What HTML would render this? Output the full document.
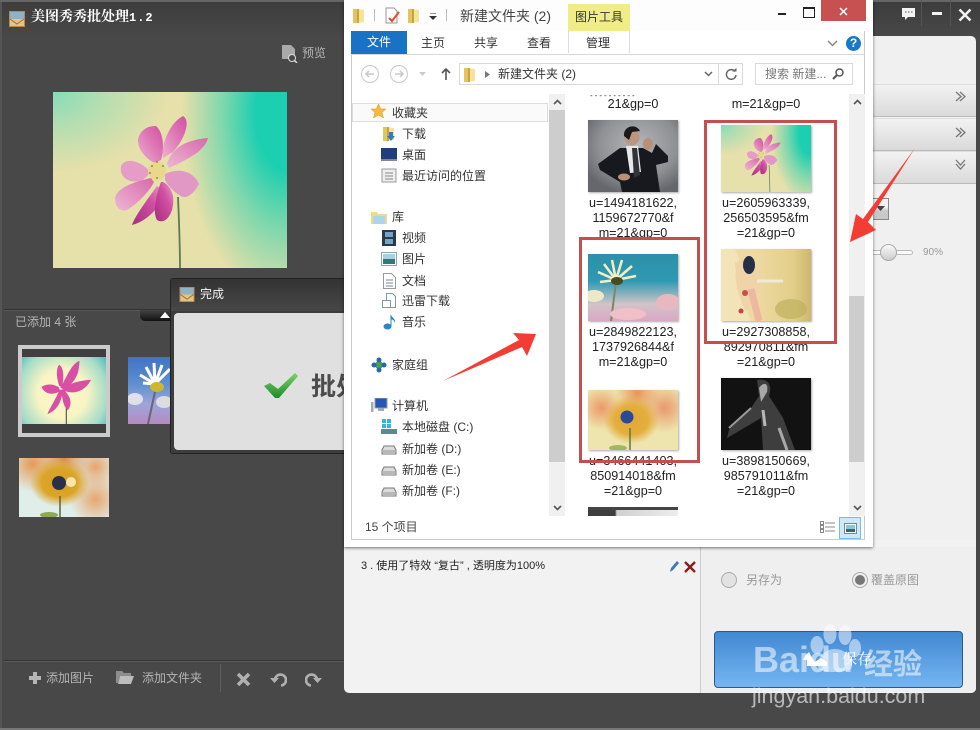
<!DOCTYPE html>
<html lang="zh">
<head>
<meta charset="utf-8">
<title>美图秀秀批处理</title>
<style>
html,body{margin:0;padding:0;background:#484848}
#r{position:relative;width:980px;height:730px;overflow:hidden;background:#484848;font-family:"Liberation Sans","Noto Sans CJK SC",sans-serif;font-size:12px}
#r div,#r svg{position:absolute}
.t{position:absolute;white-space:nowrap;line-height:16px}
.g{color:#b4b4b4;font-family:"Liberation Sans","WenQuanYi Zen Hei",sans-serif}
.e{color:#333}
.c{position:absolute;width:100px;text-align:center;color:#222;font-size:12.6px;line-height:15px;font-family:"Liberation Sans","Noto Sans CJK SC",sans-serif}
.box{border:3px solid #c64e4e;box-sizing:border-box}
svg use{position:static}
</style>
</head>
<body>
<div id="r">
<svg width="0" height="0" style="position:absolute">
<defs>
<linearGradient id="p1" x1="0" y1="1" x2="1" y2="0"><stop offset="0" stop-color="#eeb0d0"/><stop offset=".55" stop-color="#de78b6"/><stop offset="1" stop-color="#d050a2"/></linearGradient>
<linearGradient id="p2" x1="1" y1="0" x2="0" y2="1"><stop offset="0" stop-color="#d868ac"/><stop offset="1" stop-color="#eeb8d2"/></linearGradient>
<linearGradient id="p3" x1="0" y1="1" x2="1" y2="0"><stop offset="0" stop-color="#a82c80"/><stop offset=".6" stop-color="#d050a2"/><stop offset="1" stop-color="#e8a0c8"/></linearGradient>
<symbol id="fl" viewBox="0 0 234 176" preserveAspectRatio="none">
<path d="M125 105C126 130 127 150 127 176" fill="none" stroke="#5f7a55" stroke-width="1.800"/>
<path d="M110 66C108 50 118 30 130 24C137 28 134 44 120 60Z" fill="url(#p1)"/>
<path d="M102 71C90 66 82 52 86 44C90 36 96 34 103 34C110 40 112 55 108 68Z" fill="url(#p1)"/>
<path d="M114 72C118 58 130 48 155 46C152 58 138 66 116 76Z" fill="url(#p2)"/>
<path d="M98 80C88 70 74 64 68 74C66 88 80 92 90 88Z" fill="#e59cc6"/>
<path d="M98 86C80 90 64 96 62 106C62 116 68 120 74 118C84 112 96 100 101 90Z" fill="url(#p2)"/>
<path d="M104 94C94 108 82 124 79 133C92 130 108 116 112 100Z" fill="url(#p3)"/>
<path d="M108 90C102 105 100 122 104 128C114 134 122 118 120 104C118 96 114 92 110 90Z" fill="url(#p3)"/>
<path d="M112 82C124 76 140 78 146 92C142 100 134 108 128 104C120 100 114 92 112 88Z" fill="#e298c4"/>
<ellipse cx="104" cy="79" rx="9" ry="9" fill="#e8d88c"/>
<g fill="#8a6a5a"><circle cx="99" cy="74" r=".9"/><circle cx="104" cy="70" r=".9"/><circle cx="110" cy="74" r=".9"/><circle cx="97" cy="81" r=".9"/><circle cx="104" cy="86" r=".9"/></g>
</symbol>
<symbol id="ico" viewBox="0 0 16 16">
<rect width="16" height="16" fill="#bd8845"/>
<rect x="1" y="1" width="14" height="7" fill="#8fb2c4"/>
<rect x="1" y="8" width="14" height="7" fill="#e4c47e"/>
<path d="M1 8L8 13L15 8" fill="none" stroke="#a66e2e"/>
</symbol>
<symbol id="fd" viewBox="0 0 14 16">
<path d="M1 2h5v14H1z" fill="#e4c45e"/><path d="M5 2l7 1v12l-7 1z" fill="#f4e49a"/><path d="M5 2h2v14H5z" fill="#c9a43c"/>
</symbol>
<symbol id="drv" viewBox="0 0 16 12">
<path d="M3 2h10l2 4v4H1V6z" fill="#dcdcdc" stroke="#777"/><rect x="2" y="6" width="12" height="4" fill="#b8b8b8"/>
</symbol>
</defs>
</svg>

<!-- App base -->
<div style="left:0;top:0;width:980px;height:36px;background:linear-gradient(#3c3c3c,#484848)"></div>
<div style="left:0;top:0;width:980px;height:2px;background:#666"></div>
<div style="left:0;top:2px;width:2px;height:726px;background:#555"></div>
<div style="left:0;top:728px;width:980px;height:2px;background:#777"></div>
<svg style="left:9px;top:11px" width="16" height="16"><use href="#ico"/></svg>
<div class="t" style="left:31px;top:10px;color:#fff;font:bold 14px/16px 'Liberation Serif','Noto Serif CJK SC',serif">美图秀秀批处理<span style="font:bold 12px/16px 'Liberation Mono',monospace;letter-spacing:1px">1.2</span></div>
<svg style="left:281px;top:45px" width="17" height="18" viewBox="0 0 17 18"><path d="M1 0h9l4 4v10H1z" fill="#a9a9a9"/><circle cx="11" cy="13" r="3.5" fill="#484848" stroke="#ddd"/><path d="M13.5 15.5L16 18" stroke="#ddd" stroke-width="1.5"/></svg>
<div class="t g" style="left:302px;top:45px;font-size:12px">预览</div>

<!-- Main preview -->
<div style="left:53px;top:92px;width:234px;height:176px;background:radial-gradient(ellipse 105px 190px at 100% 12%,#1ccfb0 0,#1ccfb0 30%,rgba(28,207,176,.5) 62%,rgba(28,207,176,0) 100%),radial-gradient(ellipse 115px 80px at 0 0,#86dcb8 0,rgba(134,220,184,.5) 45%,rgba(134,220,184,0) 100%),#e6e0aa"></div>
<svg style="left:53px;top:92px" width="234" height="176"><use href="#fl"/></svg>

<div style="left:4px;top:309px;width:340px;height:1px;background:#333"></div>
<div style="left:4px;top:310px;width:340px;height:1px;background:#585858"></div>
<div style="left:140px;top:310px;width:34px;height:11px;background:linear-gradient(#444,#111);border-radius:0 0 0 5px"></div>
<svg style="left:160px;top:312px" width="10" height="6"><path d="M0 6L5 0L10 6Z" fill="#fff"/></svg>
<div class="t g" style="left:15px;top:314px;font-size:12px">已添加 4 张</div>

<!-- thumbs -->
<div style="left:18px;top:345px;width:84px;height:84px;border:4px solid #cbcbcb;background:#3f3f3f"></div>
<div style="left:22px;top:357px;width:84px;height:67px;background:radial-gradient(ellipse 62px 62px at 48% 55%,#fcf8c8 0,#f8f4c4 40%,#a6dcc8 72%,#30aab8 100%)"></div>
<svg style="left:30px;top:357px" width="68" height="67" viewBox="0 0 234 176" preserveAspectRatio="none"><path d="M125 100V176" stroke="#555" stroke-width="4"/><g fill="#d84fa4"><path d="M104 80C130 50 140 20 170 10C170 50 150 70 115 85Z"/><path d="M100 75C90 50 90 30 100 20C120 30 115 60 110 80Z"/><path d="M100 80C80 70 60 70 40 78C50 100 85 100 102 90Z"/><path d="M102 85C90 110 70 130 60 150C95 140 110 115 112 88Z"/><path d="M108 85C110 110 115 130 130 140C150 120 135 100 115 85Z"/><path d="M112 78C140 70 180 60 210 60C190 90 150 100 115 88Z"/></g></svg>
<div style="left:128px;top:357px;width:44px;height:67px;background:linear-gradient(#3f73c5 0,#5e8fd0 40%,#9da6da 70%,#b58ac0 100%)"></div>
<svg style="left:128px;top:357px" width="43" height="67"><path d="M28 30L20 67" stroke="#667" stroke-width="2"/><g stroke="#fff" stroke-width="3"><path d="M27 27L12 18M27 27L18 10M27 27L26 6M27 27L34 8M27 27L42 12M27 27L15 26"/></g><ellipse cx="29" cy="30" rx="7" ry="5" fill="#cab830"/><ellipse cx="7" cy="42" rx="8" ry="6" fill="#dfe0e8"/><ellipse cx="36" cy="45" rx="8" ry="6" fill="#dcdde0"/></svg>
<div style="left:19px;top:458px;width:90px;height:59px;background:radial-gradient(ellipse 30px 24px at 45% 42%,#d6a020 0,#dca52a 60%,transparent 100%),radial-gradient(circle at 85% 70%,#e8a66e 0,transparent 30%),radial-gradient(circle at 15% 10%,#e59a56 0,transparent 30%),radial-gradient(circle at 85% 15%,#e8a56c 0,transparent 25%),radial-gradient(circle at 50% 0,#d88c48 0,transparent 35%),#dfeee8"></div>
<svg style="left:19px;top:458px" width="90" height="59"><circle cx="40" cy="25" r="7" fill="#28304a"/><path d="M41 38V59" stroke="#59663a" stroke-width="1.500"/><ellipse cx="30" cy="57" rx="9" ry="3" fill="#90a850"/><circle cx="52" cy="24" r="5" fill="#fff4d0" opacity=".8"/></svg>

<!-- bottom toolbar -->
<div style="left:4px;top:660px;width:340px;height:1px;background:#333"></div>
<div style="left:4px;top:661px;width:340px;height:1px;background:#5a5a5a"></div>
<svg style="left:29px;top:672px" width="12" height="12"><path d="M4 0h4v4h4v4H8v4H4V8H0V4h4z" fill="#b5b5b5"/></svg>
<div class="t g" style="left:46px;top:670px">添加图片</div>
<svg style="left:116px;top:671px" width="18" height="14"><path d="M0 0h6l2 2h7v3H4L2 12H0z" fill="#8d8d8d"/><path d="M4 5h14l-3 8H2z" fill="#bcbcbc"/></svg>
<div class="t g" style="left:142px;top:670px">添加文件夹</div>
<div style="left:220px;top:664px;width:1px;height:28px;background:#5f5f5f"></div>
<svg style="left:236px;top:672px" width="15" height="15"><path d="M2 2L13 13M13 2L2 13" stroke="#b0b0b0" stroke-width="3.600"/></svg>
<svg style="left:270px;top:671px" width="17" height="16" fill="none"><path d="M5 10V9A5.500 5.500 0 1 1 11 14.500" stroke="#b0b0b0" stroke-width="2.600"/><path d="M0 7h9l-4.500 5z" fill="#b0b0b0"/></svg>
<svg style="left:305px;top:671px" width="17" height="16" fill="none"><path d="M12 10V9A5.500 5.500 0 1 0 6 14.500" stroke="#b0b0b0" stroke-width="2.600"/><path d="M17 7h-9l4.500 5z" fill="#b0b0b0"/></svg>

<!-- dialog -->
<div style="left:170px;top:278px;width:180px;height:176px;background:#3d3d3d;border:1px solid #222;border-radius:3px 0 0 3px;box-sizing:border-box"></div>
<div style="left:171px;top:279px;width:175px;height:32px;background:linear-gradient(#333,#474747)"></div>
<svg style="left:179px;top:287px" width="16" height="15"><use href="#ico"/></svg>
<div class="t" style="left:200px;top:286px;color:#f4f4f4;font-size:12px">完成</div>
<div style="left:174px;top:313px;width:175px;height:137px;background:#e0e0e0;border-radius:4px"></div>
<svg style="left:263px;top:372px" width="36" height="27" viewBox="0 0 36 27"><defs><linearGradient id="ck" x1="0" y1="0" x2="0" y2="1"><stop offset="0" stop-color="#7ad268"/><stop offset="1" stop-color="#1e8c28"/></linearGradient></defs><path d="M1 14L7 11L15 17L32 1L35 4L16 26L12 26Z" fill="url(#ck)"/></svg>
<div class="t" style="left:311px;top:372px;line-height:30px;font-size:25px;font-weight:bold;color:#4c4c4c">批处</div>

<!-- right panel -->
<div style="left:860px;top:36px;width:116px;height:657px;background:#f0f0f0;border-radius:0 5px 5px 0"></div>
<div style="left:860px;top:84px;width:116px;height:31px;background:linear-gradient(#f2f2f2,#dadada);border-top:1px solid #ddd;border-bottom:1px solid #bbb"></div>
<div style="left:860px;top:118px;width:116px;height:31px;background:linear-gradient(#f2f2f2,#dadada);border-top:1px solid #ddd;border-bottom:1px solid #bbb"></div>
<div style="left:860px;top:151px;width:116px;height:31px;background:linear-gradient(#f2f2f2,#dadada);border-top:1px solid #ddd;border-bottom:1px solid #bbb"></div>
<svg style="left:955px;top:91px" width="11" height="11" fill="none" stroke="#777" stroke-width="1.300"><path d="M1 1L6 5.500L1 10M5 1L10 5.500L5 10"/></svg>
<svg style="left:955px;top:127px" width="11" height="11" fill="none" stroke="#777" stroke-width="1.300"><path d="M1 1L6 5.500L1 10M5 1L10 5.500L5 10"/></svg>
<svg style="left:955px;top:159px" width="11" height="11" fill="none" stroke="#777" stroke-width="1.300"><path d="M1 1L5.500 6L10 1M1 5L5.500 10L10 5"/></svg>
<div style="left:860px;top:198px;width:29px;height:22px;background:linear-gradient(#f2f2f2 40%,#c8c8c8 60%);border:1px solid #888;box-sizing:border-box"></div>
<svg style="left:876px;top:206px" width="9" height="5"><path d="M0 0h9L4.500 5z" fill="#444"/></svg>
<div style="left:870px;top:250px;width:41px;height:3px;background:#fafafa;border:1px solid #bbb;border-radius:4px"></div>
<div style="left:880px;top:244px;width:15px;height:15px;background:linear-gradient(#fafafa,#ccc);border:1px solid #aaa;border-radius:50%"></div>
<div class="t" style="left:923px;top:245px;color:#999;font-size:10px">90%</div>

<!-- top right buttons -->
<svg style="left:902px;top:8px" width="13" height="12"><path d="M0 0h13v9H6l-3 3V9H0z" fill="#f2f2f2"/><path d="M3 4h1.500M6 4h1.500M9 4h1.500" stroke="#555"/></svg>
<div style="left:921px;top:0;width:1px;height:26px;background:#555"></div>
<div style="left:950px;top:0;width:1px;height:26px;background:#555"></div>
<div style="left:932px;top:12px;width:10px;height:3px;background:#f2f2f2"></div>
<svg style="left:958px;top:8px" width="14" height="14"><path d="M1.500 1.500L12.500 12.500M12.500 1.500L1.500 12.500" stroke="#f2f2f2" stroke-width="2.500"/></svg>

<!-- bottom panel -->
<div style="left:344px;top:540px;width:632px;height:153px;background:#f2f2f2;border-radius:0 0 5px 5px"></div>
<div style="left:700px;top:547px;width:1px;height:146px;background:#ccc"></div>
<div style="left:701px;top:547px;width:275px;height:146px;background:#efefef;border-radius:0 0 5px 0"></div>
<div class="t" style="left:361px;top:558px;color:#222;font:11px/16px 'Liberation Sans','WenQuanYi Zen Hei',sans-serif">3 . 使用了特效 “复古” , 透明度为100%</div>
<svg style="left:669px;top:560px" width="12" height="13"><path d="M1 12L2 8L8 1L10 3L4 10Z" fill="#3a78b8"/></svg>
<svg style="left:684px;top:561px" width="12" height="12"><path d="M1 1L11 11M11 1L1 11" stroke="#8a1c1c" stroke-width="2.400"/></svg>
<div style="left:721px;top:572px;width:14px;height:14px;background:#e2e2e2;border:1px solid #aaa;border-radius:50%"></div>
<div class="t g" style="left:746px;top:572px;color:#999">另存为</div>
<div style="left:852px;top:572px;width:14px;height:14px;background:#eee;border:1px solid #aaa;border-radius:50%"></div>
<div style="left:855px;top:575px;width:10px;height:10px;background:#777;border-radius:50%"></div>
<div class="t g" style="left:871px;top:572px;color:#999">覆盖原图</div>
<div style="left:714px;top:631px;width:249px;height:57px;box-sizing:border-box;background:linear-gradient(#4288d2,#75b6f2);border:1px solid #265c92;border-radius:4px"></div>

<!-- watermark -->
<svg style="left:805px;top:623px" width="58" height="50" viewBox="0 0 58 50" fill="#fff" opacity=".5"><ellipse cx="12" cy="22" rx="6.500" ry="9"/><ellipse cx="25" cy="11" rx="6.500" ry="10"/><ellipse cx="40" cy="12" rx="6.500" ry="10"/><ellipse cx="50" cy="25" rx="6" ry="9"/><path d="M30 26C42 26 50 38 46 46C40 50 20 50 14 46C10 38 18 26 30 26Z"/></svg>
<div class="t" style="left:753px;top:640px;line-height:40px;font-size:36px;font-weight:bold;color:rgba(255,255,255,.55)">Baidu</div>
<div class="t" style="left:864px;top:649px;line-height:32px;font-size:29px;font-weight:bold;color:rgba(255,255,255,.55)">经验</div>
<div class="t" style="left:752px;top:682px;line-height:28px;font-size:21.500px;color:rgba(255,255,255,.62)">jingyan.baidu.com</div>
<svg style="left:803px;top:652px" width="25" height="16"><path d="M0 8L4 8L4 14L24 14L24 10L18 6L12 10L8 4L6 0L2 4Z" fill="#fff"/></svg>
<div class="t" style="left:842px;top:652px;color:#fff;font:15px/16px 'Liberation Serif','Noto Serif CJK SC',serif">保存</div>

<!-- Explorer window -->
<div style="left:344px;top:0;width:529px;height:547px;background:#fff;box-shadow:0 1px 3px rgba(0,0,0,.55)"></div>
<div style="left:351px;top:30px;width:514px;height:510px;border:1px solid #ccc;box-sizing:border-box;background:#fff"></div>
<div style="left:344px;top:0;width:529px;height:31px;background:#fdfdfd"></div>
<svg style="left:352px;top:7px" width="14" height="16"><use href="#fd"/></svg>
<div style="left:374px;top:9px;width:1px;height:12px;background:#bbb"></div>
<svg style="left:385px;top:7px" width="16" height="17"><path d="M1 1h8l3 3v12H1z" fill="#fff" stroke="#999"/><path d="M4 11L7 14L14 5" fill="none" stroke="#d9553a" stroke-width="2.200"/></svg>
<svg style="left:407px;top:7px" width="14" height="16"><use href="#fd"/></svg>
<svg style="left:429px;top:13px" width="8" height="7"><path d="M1 0h6" stroke="#333"/><path d="M0 3h8L4 7z" fill="#333"/></svg>
<div style="left:446px;top:9px;width:1px;height:12px;background:#bbb"></div>
<div class="t" style="left:460px;top:8px;font-size:14px;color:#444">新建文件夹 (2)</div>
<div style="left:568px;top:4px;width:62px;height:27px;background:#f0ec88"></div>
<div class="t e" style="left:575px;top:9px;font-size:12px">图片工具</div>
<div style="left:778px;top:13px;width:8px;height:2px;background:#222"></div>
<div style="left:803px;top:7px;width:10px;height:8px;border:1px solid #222;border-top-width:2px;background:#fff"></div>
<div style="left:821px;top:0;width:45px;height:21px;background:#c75050"></div>
<svg style="left:839px;top:7px" width="9" height="9"><path d="M1 1L8 8M8 1L1 8" stroke="#fff" stroke-width="1.500"/></svg>

<!-- ribbon -->
<div style="left:351px;top:31px;width:56px;height:23px;background:#1a72c4"></div>
<div class="t" style="left:367px;top:34px;color:#fff;font-size:12px">文件</div>
<div class="t e" style="left:421px;top:35px">主页</div>
<div class="t e" style="left:474px;top:35px">共享</div>
<div class="t e" style="left:527px;top:35px">查看</div>
<div class="t e" style="left:586px;top:35px">管理</div>
<div style="left:568px;top:31px;width:1px;height:22px;background:#ddd"></div>
<div style="left:629px;top:31px;width:1px;height:22px;background:#ddd"></div>
<div style="left:351px;top:54px;width:514px;height:1px;background:#d8d8d8"></div>
<svg style="left:827px;top:40px" width="11" height="7"><path d="M1 1L5.500 5.500L10 1" fill="none" stroke="#888" stroke-width="1.500"/></svg>
<div style="left:846px;top:36px;width:15px;height:15px;border-radius:50%;background:#1a78c6;color:#fff;font:bold 12px/15px 'Liberation Sans',sans-serif;text-align:center">?</div>

<!-- address row -->
<svg style="left:360px;top:64px" width="50" height="20" fill="none" stroke="#c8c8c8"><circle cx="10" cy="10" r="8.500"/><circle cx="39" cy="10" r="8.500"/><path d="M14 10H6M9 7L6 10L9 13M35 10H43M40 7L43 10L40 13" stroke-width="1.500"/></svg>
<svg style="left:419px;top:72px" width="7" height="4"><path d="M0 0h7L3.500 4z" fill="#ccc"/></svg>
<svg style="left:441px;top:68px" width="10" height="12"><path d="M5 12V1M1 5L5 1L9 5" fill="none" stroke="#555" stroke-width="1.600"/></svg>
<div style="left:459px;top:63px;width:284px;height:22px;border:1px solid #d9d9d9;box-sizing:border-box"></div>
<svg style="left:463px;top:66px" width="14" height="16"><use href="#fd"/></svg>
<svg style="left:485px;top:71px" width="5" height="7"><path d="M0 0L5 3.500L0 7z" fill="#777"/></svg>
<div class="t" style="left:498px;top:66px;color:#333;font-size:12px">新建文件夹 (2)</div>
<svg style="left:704px;top:71px" width="9" height="6"><path d="M1 1L4.500 4.500L8 1" fill="none" stroke="#666" stroke-width="1.500"/></svg>
<div style="left:718px;top:64px;width:1px;height:20px;background:#d9d9d9"></div>
<svg style="left:725px;top:68px" width="12" height="12" fill="none"><path d="M10 3.500A4.800 4.800 0 1 0 11 7" stroke="#666" stroke-width="1.500"/><path d="M7 3.500h4.500V0z" fill="#666"/></svg>
<div style="left:755px;top:63px;width:98px;height:22px;border:1px solid #d9d9d9;box-sizing:border-box"></div>
<div class="t" style="left:765px;top:66px;color:#777;font-size:12px">搜索 新建...</div>
<svg style="left:832px;top:68px" width="12" height="12" fill="none" stroke="#555" stroke-width="1.500"><circle cx="7.500" cy="4.500" r="3.500"/><path d="M5 7L1 11" stroke-width="2"/></svg>

<!-- nav pane -->
<div style="left:352px;top:103px;width:196px;height:19px;background:#fafafa;border:1px solid #ddd;box-sizing:border-box"></div>
<svg style="left:371px;top:104px" width="15" height="15"><path d="M7.500 0L9.800 5H15L11 8.500L12.500 14L7.500 11L2.500 14L4 8.500L0 5H5.200Z" fill="#f6b93c" stroke="#d89528" stroke-width=".5"/></svg>
<div class="t e" style="left:392px;top:105px">收藏夹</div>
<svg style="left:382px;top:125px" width="14" height="16"><use href="#fd"/><path d="M7 7h4v4h2l-4 5-4-5h2z" fill="#2e7cc4"/></svg>
<div class="t e" style="left:402px;top:126px">下载</div>
<svg style="left:381px;top:148px" width="16" height="14"><rect width="16" height="11" fill="#1f3e7a"/><rect y="11" width="16" height="2" fill="#888"/></svg>
<div class="t e" style="left:402px;top:147px">桌面</div>
<svg style="left:381px;top:168px" width="16" height="15"><rect x="1" y="1" width="14" height="13" fill="#eee" stroke="#999"/><path d="M4 5h8M4 8h8M4 11h8" stroke="#888"/></svg>
<div class="t e" style="left:402px;top:168px">最近访问的位置</div>
<svg style="left:371px;top:210px" width="16" height="14"><path d="M0 2h6l1 2h9v10H0z" fill="#f0d98c"/><path d="M2 6h12v8H2z" fill="#a9d6ec"/></svg>
<div class="t e" style="left:392px;top:209px">库</div>
<svg style="left:382px;top:230px" width="14" height="16"><rect width="14" height="16" fill="#2d3a46"/><rect x="3" y="2" width="8" height="5" fill="#70a4c8"/><rect x="3" y="9" width="8" height="5" fill="#70a4c8"/></svg>
<div class="t e" style="left:402px;top:230px">视频</div>
<svg style="left:381px;top:252px" width="16" height="14"><rect x=".5" y=".5" width="15" height="13" fill="#fff" stroke="#8aa"/><rect x="2" y="2" width="12" height="5" fill="#a8d0e0"/><rect x="2" y="7" width="12" height="5" fill="#2f7a78"/></svg>
<div class="t e" style="left:402px;top:251px">图片</div>
<svg style="left:383px;top:273px" width="13" height="16"><path d="M.5.500h8l4 4v11H.5z" fill="#fff" stroke="#999"/><path d="M3 7h7M3 10h7M3 13h7" stroke="#789"/></svg>
<div class="t e" style="left:402px;top:273px">文档</div>
<svg style="left:381px;top:293px" width="16" height="16" fill="#fff" stroke="#7a9ab0"><path d="M5.500.500h6l3 3v11h-9z"/><rect x="1.500" y="7.500" width="8" height="7"/></svg>
<div class="t e" style="left:402px;top:293px">迅雷下载</div>
<svg style="left:383px;top:314px" width="13" height="16"><ellipse cx="4.500" cy="12.500" rx="4" ry="3" fill="#2a84c8"/><path d="M7.500 12V0C9 4 13 5 12 9C11 6 9.500 5.500 8.500 5.500V12z" fill="#2a84c8"/></svg>
<div class="t e" style="left:402px;top:314px">音乐</div>
<svg style="left:371px;top:357px" width="16" height="16"><circle cx="8" cy="8" r="4" fill="#4aa04a"/><circle cx="3" cy="8" r="2.500" fill="#2a64b4"/><circle cx="13" cy="8" r="2.500" fill="#2a64b4"/><circle cx="8" cy="3" r="2.500" fill="#2a64b4"/><circle cx="8" cy="13" r="2.500" fill="#2a64b4"/></svg>
<div class="t e" style="left:392px;top:357px">家庭组</div>
<svg style="left:371px;top:398px" width="17" height="15"><rect x="4" y="0" width="12" height="10" fill="#2358b8" stroke="#99a"/><rect x="7" y="10" width="6" height="3" fill="#9ab"/><rect x="0" y="4" width="2.500" height="10" fill="#aaa"/></svg>
<div class="t e" style="left:392px;top:398px">计算机</div>
<svg style="left:381px;top:419px" width="16" height="16"><g fill="#38b4dc"><rect x="1" y="0" width="4" height="4"/><rect x="6" y="0" width="4" height="4"/><rect x="1" y="5" width="4" height="4"/><rect x="6" y="5" width="4" height="4"/></g><rect x="0" y="10" width="16" height="5" fill="#5a8a96"/></svg>
<div class="t e" style="left:402px;top:419px">本地磁盘 (C:)</div>
<svg style="left:381px;top:444px" width="16" height="12"><use href="#drv"/></svg>
<div class="t e" style="left:402px;top:441px">新加卷 (D:)</div>
<svg style="left:381px;top:465px" width="16" height="12"><use href="#drv"/></svg>
<div class="t e" style="left:402px;top:462px">新加卷 (E:)</div>
<svg style="left:381px;top:486px" width="16" height="12"><use href="#drv"/></svg>
<div class="t e" style="left:402px;top:483px">新加卷 (F:)</div>

<!-- nav scrollbar -->
<div style="left:549px;top:94px;width:16px;height:422px;background:#f0f0f0"></div>
<div style="left:549px;top:110px;width:16px;height:352px;background:#cdcdcd"></div>
<svg style="left:553px;top:99px" width="9" height="6"><path d="M1 5L4.500 1.500L8 5" fill="none" stroke="#555" stroke-width="1.600"/></svg>
<svg style="left:553px;top:505px" width="9" height="6"><path d="M1 1L4.500 4.500L8 1" fill="none" stroke="#555" stroke-width="1.600"/></svg>

<!-- content scrollbar -->
<div style="left:849px;top:94px;width:16px;height:422px;background:#f0f0f0"></div>
<div style="left:849px;top:296px;width:15px;height:166px;background:#cdcdcd"></div>
<svg style="left:853px;top:99px" width="9" height="6"><path d="M1 5L4.500 1.500L8 5" fill="none" stroke="#555" stroke-width="1.600"/></svg>
<svg style="left:853px;top:505px" width="9" height="6"><path d="M1 1L4.500 4.500L8 1" fill="none" stroke="#555" stroke-width="1.600"/></svg>

<!-- Content labels -->
<div class="c" style="left:583px;top:97px">21&amp;gp=0</div>
<div class="c" style="left:716px;top:97px">m=21&amp;gp=0</div>
<div class="t" style="left:590px;top:88px;font-size:8px;color:#333;letter-spacing:2px">----------</div>
<div style="left:565px;top:88px;width:284px;height:6px;background:#fff"></div>

<!-- man -->
<div style="left:588px;top:120px;width:90px;height:72px;background:radial-gradient(ellipse 60px 50px at 55% 35%,#b4b6b8 0,#8f9094 65%,#66676c 100%);box-shadow:1px 1px 2px #aaa;overflow:hidden"></div>
<svg style="left:588px;top:120px" width="90" height="72"><path d="M32 28L10 44L12 50L32 62L34 72H72L68 45L80 42L80 36L68 24L64 33L55 28Z" fill="#17191e"/><path d="M38 26L50 26L53 52L42 53Z" fill="#e8e8e8"/><path d="M44 28L49 28L52 55L46 58Z" fill="#30333a"/><ellipse cx="44" cy="17" rx="7.500" ry="8.500" fill="#bd9680"/><path d="M36 16C35 6 48 3 52 11L44 12L41 20Z" fill="#1a1a1a"/><ellipse cx="60" cy="24" rx="5" ry="6" fill="#b89078"/><ellipse cx="36" cy="57" rx="6" ry="3.500" fill="#b89078"/></svg>
<div class="c" style="left:583px;top:196px">u=1494181622,<br>1159672770&amp;f<br>m=21&amp;gp=0</div>

<!-- flower 2 -->
<div style="left:721px;top:125px;width:90px;height:67px;background:radial-gradient(ellipse 40px 72px at 100% 12%,#1ccfb0 0,#1ccfb0 30%,rgba(28,207,176,.5) 62%,rgba(28,207,176,0) 100%),radial-gradient(ellipse 44px 30px at 0 0,#86dcb8 0,rgba(134,220,184,.5) 45%,rgba(134,220,184,0) 100%),#e6e0aa;box-shadow:1px 1px 2px #aaa"></div>
<svg style="left:721px;top:125px" width="90" height="67"><use href="#fl"/></svg>
<div class="c" style="left:716px;top:196px">u=2605963339,<br>256503595&amp;fm<br>=21&amp;gp=0</div>

<!-- daisy 2 -->
<div style="left:588px;top:254px;width:90px;height:67px;background:linear-gradient(#2c90a8 0,#2f99b2 40%,#d2c4c8 75%,#d8a8c4 100%);box-shadow:1px 1px 2px #aaa"></div>
<svg style="left:588px;top:254px" width="90" height="67"><path d="M28 28L23 67" stroke="#7a8a60" stroke-width="2"/><g stroke="#f2efc8" stroke-width="2.500"><path d="M28 26L10 18M28 26L16 10M28 26L24 6M28 26L34 6M28 26L44 12M28 26L48 22M28 26L12 28"/></g><ellipse cx="29" cy="27" rx="6" ry="4" fill="#4a4a20"/><ellipse cx="6" cy="42" rx="10" ry="6" fill="#eee8c8"/><ellipse cx="80" cy="48" rx="12" ry="8" fill="#e8b8c0"/><ellipse cx="40" cy="60" rx="18" ry="6" fill="#f0c0c8"/></svg>
<div class="c" style="left:583px;top:325px">u=2849822123,<br>1737926844&amp;f<br>m=21&amp;gp=0</div>

<!-- girl -->
<div style="left:721px;top:249px;width:90px;height:72px;background:linear-gradient(90deg,#eedcae,#eed9a2 40%,#e2cf88 80%,#cdb770);box-shadow:1px 1px 2px #aaa"></div>
<svg style="left:721px;top:249px" width="90" height="72"><path d="M0 0H14L18 10L14 28L20 50L30 72H0Z" fill="#f3e4b8"/><path d="M14 14C26 6 38 10 40 28L34 54L24 62L16 40Z" fill="#f0d4a8"/><ellipse cx="28" cy="16" rx="6" ry="9" fill="#233046"/><path d="M36 32H62" stroke="#f2ead8" stroke-width="3"/><path d="M30 40L38 72" stroke="#eeb8a0" stroke-width="7"/><circle cx="24" cy="44" r="3" fill="#c8504c"/><circle cx="20" cy="62" r="2.500" fill="#c8404c"/><ellipse cx="70" cy="60" rx="16" ry="10" fill="#bdb060" opacity=".7"/></svg>
<div class="c" style="left:716px;top:325px">u=2927308858,<br>892970811&amp;fm<br>=21&amp;gp=0</div>

<!-- sunflower 2 -->
<div style="left:588px;top:390px;width:90px;height:60px;background:radial-gradient(ellipse 28px 24px at 48% 50%,#e0a83a 0,#e4ae3c 60%,transparent 100%),radial-gradient(circle at 85% 30%,#e89a6c 0,transparent 28%),radial-gradient(circle at 15% 30%,#ea9a68 0,transparent 25%),radial-gradient(circle at 55% 5%,#e8945a 0,transparent 30%),#eee4ae;box-shadow:1px 1px 2px #aaa"></div>
<svg style="left:588px;top:390px" width="90" height="60"><circle cx="39" cy="27" r="6.500" fill="#2a4a98"/><path d="M42 38V60" stroke="#607a3c" stroke-width="1.500"/><ellipse cx="30" cy="58" rx="9" ry="3" fill="#a0b860"/></svg>
<div class="c" style="left:583px;top:454px">u=3466441403,<br>850914018&amp;fm<br>=21&amp;gp=0</div>

<!-- dark -->
<div style="left:721px;top:378px;width:90px;height:72px;background:#121212;box-shadow:1px 1px 2px #aaa"></div>
<svg style="left:721px;top:378px" width="90" height="72"><path d="M36 2C46 0 52 6 48 18L62 40L74 72H42L40 40L30 46L6 60L8 52L30 30L38 18Z" fill="#3e3e3e"/><path d="M38 10C42 4 48 4 46 14L40 24Z" fill="#a8a8a8"/><path d="M30 30L8 50" stroke="#9a9a9a" stroke-width="2"/><path d="M42 32L44 48" stroke="#b8b8b8" stroke-width="3"/><path d="M58 50L66 72" stroke="#a8a8a8" stroke-width="3"/></svg>
<div class="c" style="left:716px;top:454px">u=3898150669,<br>985791011&amp;fm<br>=21&amp;gp=0</div>

<!-- small thumb -->
<div style="left:588px;top:507px;width:90px;height:9px;background:linear-gradient(90deg,#3e3e3e 0,#3e3e3e 30%,#cfcfcf 32%,#eee 100%)"></div>
<div style="left:588px;top:507px;width:90px;height:3px;background:#444"></div>

<!-- status bar -->
<div style="left:352px;top:516px;width:512px;height:23px;background:#fff"></div>
<div class="t" style="left:365px;top:519px;color:#444;font-size:12px">15 个项目</div>
<svg style="left:820px;top:521px" width="15" height="13" stroke="#888" fill="none"><rect x=".5" y=".5" width="3" height="3"/><rect x=".5" y="4.500" width="3" height="3"/><rect x=".5" y="8.500" width="3" height="3"/><path d="M5 2h10M5 6h10M5 10h10"/></svg>
<div style="left:839px;top:517px;width:22px;height:22px;box-sizing:border-box;background:#cfe8f8;border:1px solid #74bde6"></div>
<svg style="left:844px;top:523px" width="13" height="11"><rect x=".5" y=".5" width="12" height="10" fill="#fff" stroke="#789"/><rect x="2" y="2" width="9" height="4" fill="#8cc4dc"/><rect x="2" y="6" width="9" height="3" fill="#2f6a78"/></svg>

<!-- red boxes -->
<div class="box" style="left:704px;top:120px;width:133px;height:224px"></div>
<div class="box" style="left:579px;top:237px;width:121px;height:226px"></div>

<!-- arrows -->
<svg style="left:435px;top:325px" width="110" height="65"><path d="M8 56L84 15L78 8L101 9L92 31L87 22Z" fill="#f23c34"/></svg>
<svg style="left:840px;top:140px" width="85" height="110"><path d="M75 8L28 82L36 90L10 102L16 74L23 79Z" fill="#f23c34"/></svg>
</div>
</body>
</html>
